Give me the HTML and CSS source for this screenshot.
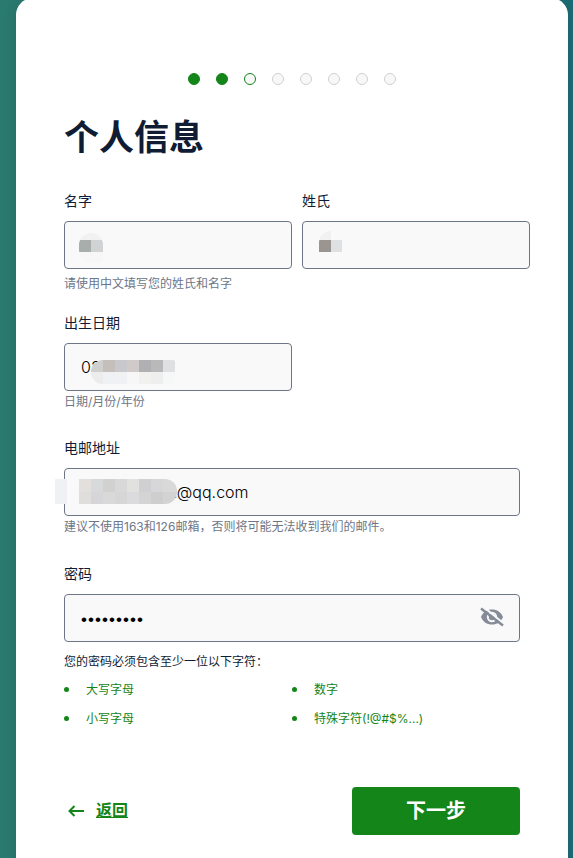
FILE: index.html
```html
<!DOCTYPE html>
<html lang="zh-CN">
<head>
    <meta charset="UTF-8">
    <meta name="viewport" content="width=device-width, initial-scale=1.0">
    <title>个人信息</title>
    <link rel="stylesheet" href="styles.css">
</head>
<body>
    <main class="card">
        <div class="steps">
            <span class="step done"></span>
            <span class="step done"></span>
            <span class="step current"></span>
            <span class="step"></span>
            <span class="step"></span>
            <span class="step"></span>
            <span class="step"></span>
            <span class="step"></span>
        </div>
        <h1>个人信息</h1>
        <form>
            <div class="names">
                <div class="field">
                    <label for="first-name">名字</label>
                    <div class="control">
                        <input type="text" id="first-name">
                        <span class="mask mask-first"></span>
                    </div>
                </div>
                <div class="field">
                    <label for="last-name">姓氏</label>
                    <div class="control">
                        <input type="text" id="last-name">
                        <span class="mask mask-last"></span>
                    </div>
                </div>
            </div>
            <p class="hint hint-names">请使用中文填写您的姓氏和名字</p>

            <div class="field field-birth">
                <label for="birth">出生日期</label>
                <div class="control">
                    <input type="text" id="birth" value="02">
                    <span class="mask mask-birth"></span>
                </div>
                <p class="hint">日期/月份/年份</p>
            </div>

            <div class="field field-email">
                <label for="email">电邮地址</label>
                <div class="control">
                    <input type="text" id="email" class="input-email" value=".@qq.com">
                    <span class="mask mask-email"></span>
                </div>
                <p class="hint">建议不使用163和126邮箱，否则将可能无法收到我们的邮件。</p>
            </div>

            <div class="field field-password">
                <label for="password">密码</label>
                <div class="control">
                    <input type="password" id="password" class="input-password" value="Abcdef12!">
                    <button type="button" class="toggle" aria-label="显示密码">
                        <svg width="24" height="20" viewBox="0 0 24 20">
                            <path class="eye" fill-rule="evenodd" d="M1 10C3 5 7 2.500 12 2.500S21 5 23 10c-2 5-6 7.500-11 7.500S3 15 1 10zM12 4.800a5.200 5.200 0 1 0 0 10.400 5.200 5.200 0 0 0 0-10.400z"/>
                            <circle class="eye" cx="12" cy="10" r="3.200"/>
                            <path class="slash-gap" d="M2.500-1l21 17.500"/>
                            <path class="slash" d="M1 1.500l22 17"/>
                        </svg>
                    </button>
                </div>
            </div>

            <p class="rules-title">您的密码必须包含至少一位以下字符：</p>
            <ul class="rules">
                <li>大写字母</li>
                <li>数字</li>
                <li>小写字母</li>
                <li>特殊字符(!@#$%...)</li>
            </ul>

            <div class="actions">
                <a href="#" class="back">
                    <svg width="16" height="12" viewBox="0 0 16 12">
                        <path d="M16 6H1.500M6.500 1l-5 5 5 5"/>
                    </svg>
                    <span>返回</span>
                </a>
                <button type="submit" class="next">下一步</button>
            </div>
        </form>
    </main>
</body>
</html>
```

FILE: styles.css
```css
* {
    box-sizing: border-box;
}
body {
    margin: 0;
    height: 858px;
    overflow: hidden;
    padding: 0 5px 0 16px;
    background: linear-gradient(to right, #2a7a70, #1c6c75);
    font-family: Inter, "Noto Sans CJK SC", sans-serif;
    color: #0f1c33;
}
.card {
    height: 900px;
    margin-top: -2px;
    padding: 75px 48px 0;
    background-color: #fff;
    border-radius: 17px;
    box-shadow: 0 0 14px rgba(0, 0, 0, 0.12);
}
.steps {
    display: flex;
    justify-content: center;
    gap: 16px;
}
.step {
    width: 12px;
    height: 12px;
    border: 1px solid #cfd1d5;
    border-radius: 50%;
    background-color: #f8f8f8;
}
.step.done {
    border-color: #148518;
    background-color: #148518;
}
.step.current {
    border-color: #148518;
}
h1 {
    margin: 27px 0 29px;
    font-size: 35px;
    line-height: 50px;
    font-weight: 700;
}
p {
    margin: 0;
}
.names {
    display: grid;
    grid-template-columns: 228px 228px;
    gap: 10px;
}
label {
    display: block;
    margin-bottom: 10px;
    font-size: 14px;
    line-height: 20px;
}
.control {
    position: relative;
}
input {
    display: block;
    width: 100%;
    height: 48px;
    padding: 0 16px;
    border: 1px solid #6d7687;
    border-radius: 4px;
    background-color: #f9f9f9;
    font-family: inherit;
    font-size: 16px;
    font-weight: 300;
    color: #000;
}
.hint {
    margin-top: 1px;
    font-size: 12px;
    line-height: 20px;
    color: #6d7687;
}
.hint-names {
    margin-top: 5px;
}
.field-birth {
    width: 228px;
    margin-top: 19px;
}
.field-email {
    margin-top: 26px;
}
.field-password {
    margin-top: 27px;
}
.input-email {
    padding-left: 108px;
}
.input-password {
    padding-top: 3px;
    font-family: "Liberation Sans", sans-serif;
    font-size: 17px;
    letter-spacing: 1.05px;
}

/* privacy masks over the filled-in values */
.mask {
    position: absolute;
    background-repeat: no-repeat;
}
.mask-first {
    left: 15px;
    top: 12px;
    width: 24px;
    height: 29px;
    border-radius: 12px 12px 0 12px;
    background-image:
        linear-gradient(to right, #a8aeab 50%, #d1d2d4 50%),
        linear-gradient(#f1f1f1 19px, #f7f7f7 19px);
    background-size: 100% 12px, 100% 100%;
    background-position: 0 7px, 0 0;
}
.mask-last {
    left: 17px;
    top: 10px;
    width: 23px;
    height: 21px;
    border-radius: 12px 0 0 0;
    background-image:
        linear-gradient(to right, #9a9590 12px, #dfe0e2 12px),
        linear-gradient(#f1f1f1, #f1f1f1);
    background-size: 100% 12px, 12px 9px;
    background-position: 0 9px, 0 0;
}
.mask-birth {
    left: 27px;
    top: 17px;
    width: 84px;
    height: 24px;
    border-radius: 12px 2px 0 12px;
    background-image:
        linear-gradient(to right, #cfd0ce 12px, #c5bfbb 12px 24px, #c9c9cd 24px 36px, #d0cbca 36px 48px, #b0afb2 48px 60px, #b9b9b9 60px 72px, #dfe0e2 72px),
        linear-gradient(to right, #ececec 12px, #eff1f4 12px 24px, #f0f1f2 24px 36px, #f7f7f7 36px 48px, #f1f1ef 48px 60px, #eee 60px 72px, #f6f7f7 72px);
    background-size: 100% 12px;
    background-position: 0 0, 0 12px;
}
.mask-email {
    left: -9px;
    top: 11px;
    width: 122px;
    height: 25px;
    border-radius: 0 12px 12px 0;
    background-image:
        linear-gradient(to right, #eff1f4 12px, #f9f9f9 12px 24px, #e3dfdd 24px 36px, #d8d9db 36px 48px, #d1d1d0 48px 60px, #d8d8d9 60px 72px, #e1e1df 72px 84px, #d0d0d2 84px 96px, #d7d7d9 96px 108px, #dad9d9 108px),
        linear-gradient(to right, #eff1f4 12px, #f9f9f9 12px 24px, #dfdedd 24px 36px, #d6d6d8 36px 48px, #d9d9da 48px 60px, #d6d6d6 60px 72px, #dbdbdd 72px 84px, #d4d4d4 84px 96px, #cececf 96px 108px, #d3d3d3 108px);
    background-size: 100% 13px;
    background-position: 0 0, 0 12px;
}

.toggle {
    position: absolute;
    right: 16px;
    top: 13px;
    padding: 0;
    border: 0;
    background: none;
    cursor: pointer;
}
.toggle svg {
    display: block;
}
.eye {
    fill: #858b97;
}
.slash {
    stroke: #858b97;
    stroke-width: 2.5;
}
.slash-gap {
    stroke: #f9f9f9;
    stroke-width: 2;
}
.rules-title {
    margin-top: 10px;
    font-size: 12px;
    line-height: 20px;
}
.rules {
    display: grid;
    grid-template-columns: 1fr 1fr;
    margin: 3px 0 0;
    padding: 0;
    list-style: none;
    font-size: 12px;
    line-height: 29px;
    color: #148518;
}
.rules li {
    display: flex;
    align-items: center;
    gap: 17px;
}
.rules li::before {
    content: "";
    width: 5px;
    height: 5px;
    border-radius: 50%;
    background-color: #148518;
}
.actions {
    display: flex;
    justify-content: space-between;
    align-items: center;
    margin-top: 54px;
}
.back {
    display: flex;
    align-items: center;
    gap: 12px;
    padding-left: 4px;
    color: #148518;
    font-weight: 700;
    font-size: 16px;
    line-height: 20px;
}
.back span {
    margin-top: -2px;
}
.back svg {
    fill: none;
    stroke: #148518;
    stroke-width: 2;
}
.next {
    width: 168px;
    height: 48px;
    padding: 0 0 3px;
    border: 0;
    border-radius: 4px;
    background-color: #148518;
    color: #fff;
    font-family: inherit;
    font-size: 20px;
    font-weight: 700;
    cursor: pointer;
}
```
